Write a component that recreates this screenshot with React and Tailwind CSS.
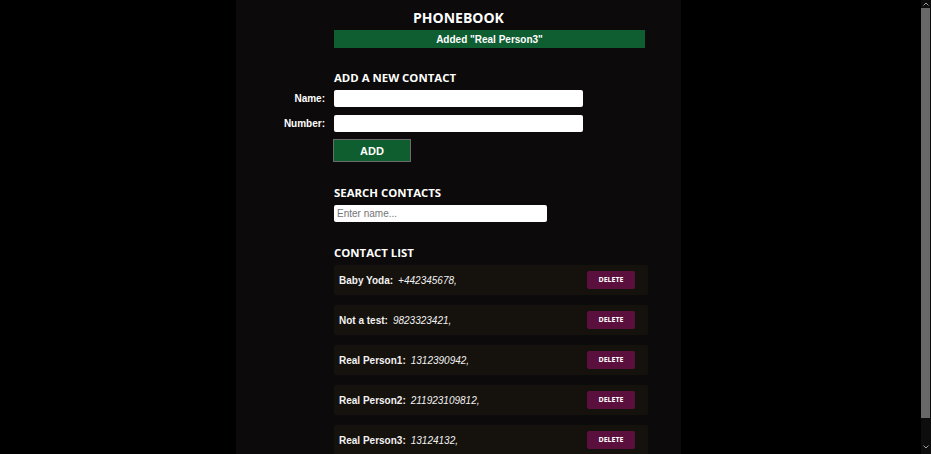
import React from "react";

const contacts = [
  ["Baby Yoda", "+442345678"],
  ["Not a test", "9823323421"],
  ["Real Person1", "1312390942"],
  ["Real Person2", "211923109812"],
  ["Real Person3", "13124132"],
];

const heading = "font-['Open_Sans',sans-serif] font-bold text-[11.4px] text-white leading-none";
const arial = "font-['Liberation_Sans',Arial,sans-serif]";

export default function App() {
  return (
    <div className="flex h-[454px] w-[931px] overflow-hidden bg-black">
      <div className="flex-1">
        <div className="ml-[236px] flex h-[454px] w-[445px] flex-col bg-[#0c0a0a]">
          <h1 className="mt-[9px] text-center font-['Open_Sans',sans-serif] text-[14px] font-bold leading-[17px] text-white">
            PHONEBOOK
          </h1>
          <div className="flex flex-col pl-[98px]">
            <div className={`mt-[4px] flex h-[18px] w-[311px] items-center justify-center bg-[#0f5e32] text-[10px] font-bold text-white ${arial}`}>
              Added "Real Person3"
            </div>

            <h2 className={`mt-[24px] ${heading}`}>ADD A NEW CONTACT</h2>
            <div className={`mt-[7px] flex flex-col gap-[8px] ${arial}`}>
              <div className="-ml-[60px] flex items-center">
                <label className="w-[51px] text-right text-[10px] font-bold text-white">Name:</label>
                <input className="ml-[9px] h-[17px] w-[249px] rounded-[2px] bg-white outline-none" />
              </div>
              <div className="-ml-[60px] flex items-center">
                <label className="w-[51px] text-right text-[10px] font-bold text-white">Number:</label>
                <input className="ml-[9px] h-[17px] w-[249px] rounded-[2px] bg-white outline-none" />
              </div>
            </div>
            <button className={`-ml-[1px] mt-[7px] flex h-[23px] w-[78px] items-center justify-center border border-[#6b6b6b] bg-[#0f5e30] text-[11px] font-bold text-white ${arial}`}>
              ADD
            </button>

            <h2 className={`mt-[25px] ${heading}`}>SEARCH CONTACTS</h2>
            <input
              placeholder="Enter name..."
              className={`mt-[6px] h-[17px] w-[213px] rounded-[2px] bg-white px-[3px] text-[10px] text-black outline-none placeholder:text-[#757575] ${arial}`}
            />

            <h2 className={`mt-[25px] ${heading}`}>CONTACT LIST</h2>
            <div className="mt-[7px] flex w-[314px] flex-col gap-[10px]">
              {contacts.map(([name, num]) => (
                <div key={name} className="flex h-[30px] shrink-0 items-center rounded-[2px] bg-[#15110d] pl-[5px] pr-[13px]">
                  <span className={`text-[10px] font-bold text-[#f2f2f2] ${arial}`}>{name}:</span>
                  <span className={`ml-[5px] text-[10px] italic text-[#f2f2f2] ${arial}`}>{num},</span>
                  <button className="ml-auto flex h-[18px] w-[48px] items-center justify-center rounded-[2px] bg-[#5a0f3c] font-['Open_Sans',sans-serif] text-[7px] font-bold text-white">
                    DELETE
                  </button>
                </div>
              ))}
            </div>
          </div>
        </div>
      </div>
      <div className="flex w-[10px] flex-col bg-[#0d0d0d]">
        <div className="flex h-[8px] items-center justify-center">
          <svg width="6" height="4" viewBox="0 0 6 4">
            <path d="M0.5 3.5 L3 1 L5.5 3.5" stroke="#a0a0a0" strokeWidth="1" fill="none" />
          </svg>
        </div>
        <div className="h-[410px] w-[9px] bg-[#686868]" />
        <div className="flex-1" />
        <div className="flex h-[14px] items-center justify-center">
          <svg width="6" height="4" viewBox="0 0 6 4">
            <path d="M0.5 0.5 L3 3 L5.5 0.5" stroke="#a0a0a0" strokeWidth="1" fill="none" />
          </svg>
        </div>
      </div>
    </div>
  );
}
